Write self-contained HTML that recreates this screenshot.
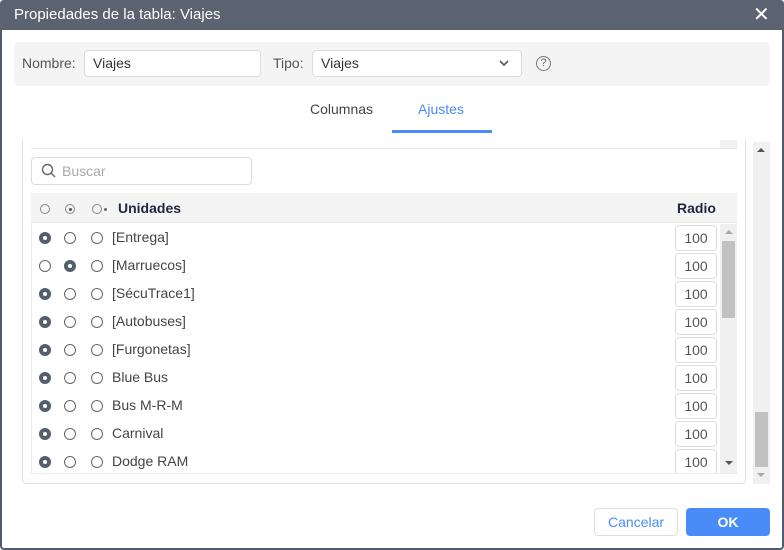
<!DOCTYPE html>
<html><head><meta charset="utf-8"><style>
*{box-sizing:border-box;margin:0;padding:0}
body{width:784px;height:550px;overflow:hidden;background:#fff;font-family:"Liberation Sans",sans-serif;font-size:14px;color:#333;position:relative}
.a{position:absolute}
.frame{left:0;top:0;width:784px;height:550px;border:2px solid #4f5b70;border-top:none;border-radius:4px}
.title{left:0;top:0;width:784px;height:30px;background:#5b6270;color:#fff;font-size:15px;line-height:30px;padding-left:14px;border-radius:4px 4px 0 0}
.inp{background:#fff;border:1px solid #dcdcdc;border-radius:4px;height:27px;line-height:25px;padding-left:8px;color:#333}
.r{position:absolute;width:12px;height:12px;border:1px solid #666;border-radius:50%}
.f{background:#555e6c;border-color:#555e6c}
.f::after{content:"";position:absolute;left:3px;top:3px;width:4px;height:4px;border-radius:50%;background:#fff}
.row{position:absolute;left:31px;width:690px;height:28px}
.row .t{position:absolute;left:81px;top:5px;color:#444}
.row .n{position:absolute;left:644px;top:1px;width:42px;height:26px;border:1px solid #ddd;border-radius:4px;text-align:center;line-height:24px;color:#555}
</style></head><body>
<div class="a frame"></div>
<div class="a title">Propiedades de la tabla: Viajes</div>
<div class="a" style="left:753px;top:5px;color:#fff;font-size:20px;line-height:20px">✕</div>
<div class="a" style="left:14px;top:42px;width:756px;height:44px;background:#f4f4f4;border-radius:4px"></div>
<div class="a" style="left:22px;top:55px;color:#555">Nombre:</div>
<div class="a inp" style="left:84px;top:50px;width:177px">Viajes</div>
<div class="a" style="left:273px;top:55px;color:#555">Tipo:</div>
<div class="a inp" style="left:312px;top:50px;width:210px">Viajes</div>
<svg class="a" style="left:498px;top:58px" width="12" height="10"><path d="M2 3l4 4 4-4" stroke="#555" stroke-width="1.6" fill="none"/></svg>
<div class="a" style="left:536px;top:56px;width:15px;height:15px;border:1px solid #777;border-radius:50%;font-size:11px;line-height:13px;text-align:center;color:#666">?</div>
<div class="a" style="left:310px;top:101px;color:#444">Columnas</div>
<div class="a" style="left:418px;top:101px;color:#4a8cf7">Ajustes</div>
<div class="a" style="left:392px;top:130px;width:100px;height:3px;background:#4a8cf7"></div>
<div class="a" style="left:22px;top:140px;width:724px;height:344px;border:1px solid #e2e2e2;border-top:none;border-radius:0 0 4px 4px"></div>
<div class="a" style="left:31px;top:148px;width:706px;height:1px;background:#e8e8e8"></div>
<div class="a" style="left:720px;top:140px;width:17px;height:8px;background:#f0f0f0"></div>
<div class="a inp" style="left:31px;top:157px;width:221px;height:28px;padding-left:30px;color:#aaa;line-height:26px">Buscar</div>
<svg class="a" style="left:41px;top:163px" width="16" height="16"><circle cx="6.5" cy="6.5" r="5" stroke="#666" stroke-width="1.4" fill="none"/><path d="M10 10l4 4" stroke="#666" stroke-width="1.4"/></svg>
<div class="a" style="left:31px;top:193px;width:706px;height:281px;border:1px solid #ececec"></div>
<div class="a" style="left:31px;top:193px;width:706px;height:30px;background:#f4f4f4;border-bottom:1px solid #e6e6e6"></div>
<div class="r" style="left:40px;top:204px;width:10px;height:10px;border-color:#888"></div>
<div class="r" style="left:65px;top:204px;width:10px;height:10px;border-color:#888"><div style="position:absolute;left:2.5px;top:2.5px;width:3px;height:3px;border-radius:50%;background:#555"></div></div>
<div class="r" style="left:92px;top:204px;width:10px;height:10px;border-color:#888"></div>
<div class="a" style="left:104px;top:208px;width:3px;height:3px;border-radius:50%;background:#666"></div>
<div class="a" style="left:118px;top:200px;font-weight:bold;color:#1d2740">Unidades</div>
<div class="a" style="left:677px;top:200px;font-weight:bold;color:#1d2740">Radio</div>
<div class="row" style="top:224px"><div class="r f" style="left:8px;top:8px"></div><div class="r" style="left:33px;top:8px"></div><div class="r" style="left:60px;top:8px"></div><div class="t">[Entrega]</div><div class="n">100</div></div>
<div class="row" style="top:252px"><div class="r" style="left:8px;top:8px"></div><div class="r f" style="left:33px;top:8px"></div><div class="r" style="left:60px;top:8px"></div><div class="t">[Marruecos]</div><div class="n">100</div></div>
<div class="row" style="top:280px"><div class="r f" style="left:8px;top:8px"></div><div class="r" style="left:33px;top:8px"></div><div class="r" style="left:60px;top:8px"></div><div class="t">[SécuTrace1]</div><div class="n">100</div></div>
<div class="row" style="top:308px"><div class="r f" style="left:8px;top:8px"></div><div class="r" style="left:33px;top:8px"></div><div class="r" style="left:60px;top:8px"></div><div class="t">[Autobuses]</div><div class="n">100</div></div>
<div class="row" style="top:336px"><div class="r f" style="left:8px;top:8px"></div><div class="r" style="left:33px;top:8px"></div><div class="r" style="left:60px;top:8px"></div><div class="t">[Furgonetas]</div><div class="n">100</div></div>
<div class="row" style="top:364px"><div class="r f" style="left:8px;top:8px"></div><div class="r" style="left:33px;top:8px"></div><div class="r" style="left:60px;top:8px"></div><div class="t">Blue Bus</div><div class="n">100</div></div>
<div class="row" style="top:392px"><div class="r f" style="left:8px;top:8px"></div><div class="r" style="left:33px;top:8px"></div><div class="r" style="left:60px;top:8px"></div><div class="t">Bus M-R-M</div><div class="n">100</div></div>
<div class="row" style="top:420px"><div class="r f" style="left:8px;top:8px"></div><div class="r" style="left:33px;top:8px"></div><div class="r" style="left:60px;top:8px"></div><div class="t">Carnival</div><div class="n">100</div></div>
<div class="row" style="top:448px;height:25px;overflow:hidden"><div class="r f" style="left:8px;top:8px"></div><div class="r" style="left:33px;top:8px"></div><div class="r" style="left:60px;top:8px"></div><div class="t">Dodge RAM</div><div class="n">100</div></div>
<div class="a" style="left:720px;top:224px;width:17px;height:249px;background:#f0f0f0"></div>
<div class="a" style="left:722px;top:241px;width:13px;height:77px;background:#c1c1c1"></div>
<div class="a" style="left:725px;top:230px;border:4px solid transparent;border-bottom:4px solid #aaa;border-top:none"></div>
<div class="a" style="left:725px;top:461px;border:4px solid transparent;border-top:4px solid #555;border-bottom:none"></div>
<div class="a" style="left:753px;top:142px;width:17px;height:342px;background:#f0f0f0"></div>
<div class="a" style="left:755px;top:412px;width:13px;height:55px;background:#c1c1c1"></div>
<div class="a" style="left:757px;top:148px;border:4px solid transparent;border-bottom:4px solid #555;border-top:none"></div>
<div class="a" style="left:757px;top:473px;border:4px solid transparent;border-top:4px solid #aaa;border-bottom:none"></div>
<div class="a" style="left:594px;top:508px;width:84px;height:28px;border:1px solid #ddd;border-radius:4px;text-align:center;line-height:26px;color:#4a8cf7">Cancelar</div>
<div class="a" style="left:686px;top:508px;width:84px;height:28px;background:#4a8cf7;border-radius:4px;text-align:center;line-height:28px;color:#fff;font-weight:bold">OK</div>
</body></html>
